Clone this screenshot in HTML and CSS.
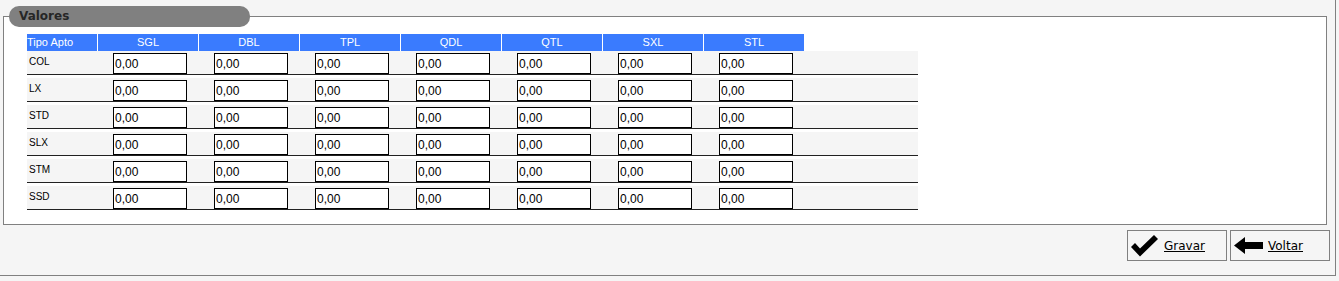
FILE: index.html
```html
<!DOCTYPE html>
<html>
  <head>
    <title>Valores</title>
    <link rel="stylesheet" href="styles.css">
  </head>
  <body>
    <div class="page">
      <fieldset class="box">
        <legend>Valores</legend>
        <div class="grid">
          <div class="head">
            <div class="hcell first">Tipo Apto</div>
            <div class="hcell">SGL</div>
            <div class="hcell">DBL</div>
            <div class="hcell">TPL</div>
            <div class="hcell">QDL</div>
            <div class="hcell">QTL</div>
            <div class="hcell">SXL</div>
            <div class="hcell">STL</div>
          </div>

          <div class="row">
            <span class="label">COL</span>
            <input value="0,00"><input value="0,00"><input value="0,00"><input value="0,00"><input value="0,00"><input value="0,00"><input value="0,00">
          </div>
          <div class="row">
            <span class="label">LX</span>
            <input value="0,00"><input value="0,00"><input value="0,00"><input value="0,00"><input value="0,00"><input value="0,00"><input value="0,00">
          </div>
          <div class="row">
            <span class="label">STD</span>
            <input value="0,00"><input value="0,00"><input value="0,00"><input value="0,00"><input value="0,00"><input value="0,00"><input value="0,00">
          </div>
          <div class="row">
            <span class="label">SLX</span>
            <input value="0,00"><input value="0,00"><input value="0,00"><input value="0,00"><input value="0,00"><input value="0,00"><input value="0,00">
          </div>
          <div class="row">
            <span class="label">STM</span>
            <input value="0,00"><input value="0,00"><input value="0,00"><input value="0,00"><input value="0,00"><input value="0,00"><input value="0,00">
          </div>
          <div class="row">
            <span class="label">SSD</span>
            <input value="0,00"><input value="0,00"><input value="0,00"><input value="0,00"><input value="0,00"><input value="0,00"><input value="0,00">
          </div>
        </div>
      </fieldset>

      <div class="actions">
        <a class="btn" href="#">
          <svg width="28" height="22" viewBox="0 0 28 22">
            <polygon points="0,12 4,8 9,13.5 23,0 27,4 9,21.5" fill="#000"/>
          </svg>
          <span>Gravar</span>
        </a>
        <a class="btn" href="#">
          <svg width="29" height="17" viewBox="0 0 29 17">
            <polygon points="0,8.5 11,0 11,5 29,5 29,12 11,12 11,17" fill="#000"/>
          </svg>
          <span>Voltar</span>
        </a>
      </div>
    </div>
  </body>
</html>
```

FILE: styles.css
```css
body {
  margin: 0;
  background-color: #f5f5f5;
  font-family: "Liberation Sans", Arial, sans-serif;
}

.page {
  box-sizing: border-box;
  width: 1336px;
  height: 276px;
  padding: 6px 5px 0 3px;
  border-right: 1px solid #808080;
  border-bottom: 1px solid #808080;
  background-color: #f5f5f5;
}

.box {
  margin: 0 3px 0 0;
  padding: 0 0 14px 23px;
  border: 1px solid #808080;
  background-color: #fff;
  min-width: 0;
}

.box legend {
  box-sizing: border-box;
  width: 241px;
  height: 21px;
  margin-left: -18px;
  padding: 0 10px;
  border-radius: 10px;
  background-color: #808080;
  color: #262626;
  font-family: "DejaVu Sans", Verdana, sans-serif;
  font-size: 12px;
  font-weight: bold;
  line-height: 21px;
}

.grid {
  width: 891px;
  padding-top: 7px;
}

.head {
  display: flex;
  gap: 1px;
  height: 17px;
}

.hcell {
  width: 100px;
  background-color: #3a7bfe;
  color: #fff;
  font-size: 11px;
  line-height: 16px;
  text-align: center;
}

.hcell.first {
  width: 70px;
  text-align: left;
}

.row {
  display: grid;
  grid-template-columns: 86px repeat(7, 101px) 1fr;
  box-sizing: border-box;
  height: 24px;
  background-color: #f5f5f5;
  border-bottom: 1px solid #222;
}

.row + .row {
  margin-top: 3px;
}

.label {
  padding: 5px 0 0 2px;
  font-size: 10px;
  line-height: 12px;
  color: #000;
}

.row input {
  box-sizing: border-box;
  width: 74px;
  height: 21px;
  align-self: end;
  margin: 0;
  padding: 0 1px;
  border: 1px solid #000;
  background-color: #fff;
  color: #000;
  font-family: "Liberation Sans", Arial, sans-serif;
  font-size: 12px;
}

.actions {
  display: flex;
  justify-content: flex-end;
  gap: 3px;
  margin-top: 5px;
}

.btn {
  box-sizing: border-box;
  display: flex;
  align-items: center;
  gap: 5px;
  width: 100px;
  height: 31px;
  padding-left: 3px;
  border: 1px solid #808080;
  background-color: #f5f5f5;
  color: #000;
  font-family: "DejaVu Sans", Verdana, sans-serif;
  font-size: 12px;
}

.btn svg {
  flex-shrink: 0;
}

.btn span {
  text-decoration: underline;
}
```
